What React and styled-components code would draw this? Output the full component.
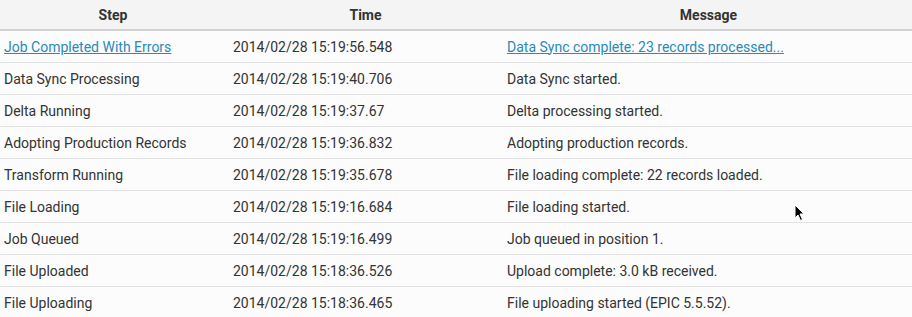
import React from "react";
import styled, { createGlobalStyle } from "styled-components";

const Global = createGlobalStyle`
  html, body { margin: 0; padding: 0; background: #fcfcfc; }
  body { font-family: Roboto, "Noto Sans", "Liberation Sans", sans-serif; }
`;

const Wrap = styled.div`
  position: relative;
  width: 912px;
  height: 317px;
  overflow: hidden;
  background: #fcfcfc;
`;

const Table = styled.table`
  width: 912px;
  border-collapse: collapse;
  table-layout: fixed;
  font-size: 14px;
  color: #333;
`;

const HeadRow = styled.tr`
  background: #f4f4f4;
  border-bottom: 2px solid #d2d2d2;
`;

const Th = styled.th`
  height: 29px;
  padding: 0;
  font-weight: 700;
  text-align: center;
  vertical-align: middle;
  color: #333;
`;

const Row = styled.tr`
  border-bottom: 1px solid #e2e2e2;
`;

const Td = styled.td`
  height: 31px;
  padding: 0 0 0 ${(p) => p.$pad}px;
  white-space: nowrap;
  overflow: hidden;
  vertical-align: middle;
`;

const Link = styled.a`
  color: #2a89b8;
  text-decoration: underline;
  cursor: pointer;
`;

const Cursor = styled.svg`
  position: absolute;
  left: 794px;
  top: 204px;
`;

const rows = [
  ["Job Completed With Errors", "2014/02/28 15:19:56.548", "Data Sync complete: 23 records processed...", true],
  ["Data Sync Processing", "2014/02/28 15:19:40.706", "Data Sync started."],
  ["Delta Running", "2014/02/28 15:19:37.67", "Delta processing started."],
  ["Adopting Production Records", "2014/02/28 15:19:36.832", "Adopting production records."],
  ["Transform Running", "2014/02/28 15:19:35.678", "File loading complete: 22 records loaded."],
  ["File Loading", "2014/02/28 15:19:16.684", "File loading started."],
  ["Job Queued", "2014/02/28 15:19:16.499", "Job queued in position 1."],
  ["File Uploaded", "2014/02/28 15:18:36.526", "Upload complete: 3.0 kB received."],
  ["File Uploading", "2014/02/28 15:18:36.465", "File uploading started (EPIC 5.5.52)."],
];

export default function App() {
  return (
    <Wrap>
      <Global />
      <Table>
        <colgroup>
          <col style={{ width: 226 }} />
          <col style={{ width: 279 }} />
          <col />
        </colgroup>
        <thead>
          <HeadRow>
            <Th>Step</Th>
            <Th>Time</Th>
            <Th>Message</Th>
          </HeadRow>
        </thead>
        <tbody>
          {rows.map(([step, time, msg, link]) => (
            <Row key={time}>
              <Td $pad={4}>{link ? <Link>{step}</Link> : step}</Td>
              <Td $pad={7}>{time}</Td>
              <Td $pad={2}>{link ? <Link>{msg}</Link> : msg}</Td>
            </Row>
          ))}
        </tbody>
      </Table>
      <Cursor width="12" height="18" viewBox="0 0 12 18">
        <path d="M1 1 L1 14 L4 11 L6.5 16.5 L8.5 15.5 L6 10 L10 10 Z" fill="#000" stroke="#fff" strokeWidth="1" />
      </Cursor>
    </Wrap>
  );
}
